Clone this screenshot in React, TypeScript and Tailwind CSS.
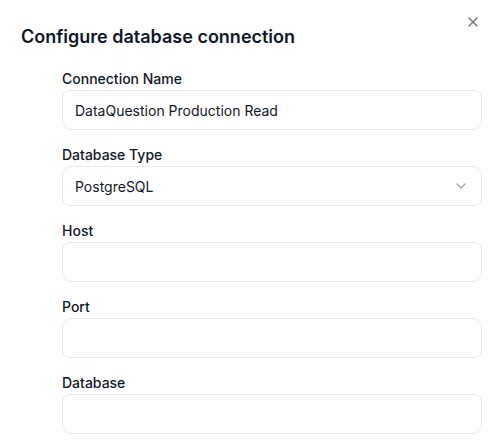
import React from "react";

function Field({ label, children }: { label: string; children: React.ReactNode }) {
  return (
    <div className="flex flex-col gap-[1px]">
      <label className="text-[14px] leading-5 font-medium text-[#111827]">{label}</label>
      {children}
    </div>
  );
}

function TextInput({ value }: { value?: string }) {
  return (
    <div className="h-10 w-full rounded-lg border border-[#e1ebf6] bg-white px-3 flex items-center text-[14px] text-[#111827]">
      {value}
    </div>
  );
}

export default function App() {
  return (
    <div
      className="relative w-[496px] h-[447px] bg-white overflow-hidden"
      style={{ fontFamily: "Inter, 'Noto Sans', sans-serif" }}
    >
      <button className="absolute right-[15px] top-[14px] text-[#4b5563] opacity-80">
        <svg width="16" height="16" viewBox="0 0 24 24" fill="none" stroke="currentColor" strokeWidth="2" strokeLinecap="round" strokeLinejoin="round">
          <path d="M18 6 6 18" />
          <path d="m6 6 12 12" />
        </svg>
      </button>
      <div className="pt-[23px] pl-[21px] pr-[14px]">
        <h2 className="text-[18px] leading-7 font-semibold text-[#0f172a]">
          Configure database connection
        </h2>
        <div className="mt-[18px] pl-[41px] flex flex-col gap-[15px]">
          <Field label="Connection Name">
            <TextInput value="DataQuestion Production Read" />
          </Field>
          <Field label="Database Type">
            <div className="h-10 w-full rounded-lg border border-[#e1ebf6] bg-white pl-3 pr-3 flex items-center justify-between text-[14px] text-[#111827]">
              <span>PostgreSQL</span>
              <svg width="16" height="16" viewBox="0 0 24 24" fill="none" stroke="#9ca3af" strokeWidth="2" strokeLinecap="round" strokeLinejoin="round">
                <path d="m6 9 6 6 6-6" />
              </svg>
            </div>
          </Field>
          <Field label="Host">
            <TextInput />
          </Field>
          <Field label="Port">
            <TextInput />
          </Field>
          <Field label="Database">
            <TextInput />
          </Field>
        </div>
      </div>
    </div>
  );
}
